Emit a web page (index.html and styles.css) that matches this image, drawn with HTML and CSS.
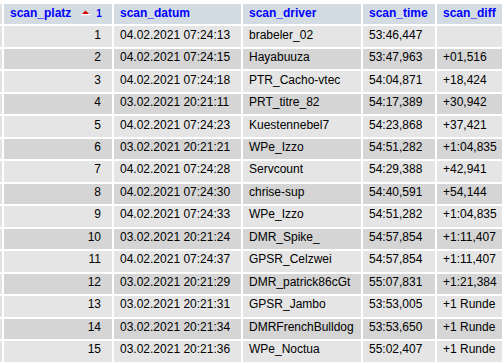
FILE: index.html
```html
<!DOCTYPE html>
<html>
<head>
<meta charset="utf-8">
<link rel="stylesheet" href="styles.css">
</head>
<body>
<table class="data">
<colgroup>
<col class="c-stub"><col class="c-platz"><col class="c-datum"><col class="c-driver"><col class="c-time"><col class="c-diff">
</colgroup>
<thead>
<tr>
<th class="stub"></th>
<th><span class="hd">scan_platz</span><svg class="sort" width="9" height="6" viewBox="0 0 9 6"><polygon points="4.5,0.5 8,4 1,4" fill="#d00000"/><rect x="0" y="4" width="9" height="1.2" fill="#ffffff"/></svg><span class="ord">1</span></th>
<th>scan_datum</th>
<th>scan_driver</th>
<th>scan_time</th>
<th>scan_diff</th>
</tr>
</thead>
<tbody>
<tr class="odd"><td class="stub"></td><td class="num">1</td><td>04.02.2021 07:24:13</td><td>brabeler_02</td><td>53:46,447</td><td></td></tr>
<tr class="even"><td class="stub"></td><td class="num">2</td><td>04.02.2021 07:24:15</td><td>Hayabuuza</td><td>53:47,963</td><td>+01,516</td></tr>
<tr class="odd"><td class="stub"></td><td class="num">3</td><td>04.02.2021 07:24:18</td><td>PTR_Cacho-vtec</td><td>54:04,871</td><td>+18,424</td></tr>
<tr class="even"><td class="stub"></td><td class="num">4</td><td>03.02.2021 20:21:11</td><td>PRT_titre_82</td><td>54:17,389</td><td>+30,942</td></tr>
<tr class="odd"><td class="stub"></td><td class="num">5</td><td>04.02.2021 07:24:23</td><td>Kuestennebel7</td><td>54:23,868</td><td>+37,421</td></tr>
<tr class="even"><td class="stub"></td><td class="num">6</td><td>03.02.2021 20:21:21</td><td>WPe_Izzo</td><td>54:51,282</td><td>+1:04,835</td></tr>
<tr class="odd"><td class="stub"></td><td class="num">7</td><td>04.02.2021 07:24:28</td><td>Servcount</td><td>54:29,388</td><td>+42,941</td></tr>
<tr class="even"><td class="stub"></td><td class="num">8</td><td>04.02.2021 07:24:30</td><td>chrise-sup</td><td>54:40,591</td><td>+54,144</td></tr>
<tr class="odd"><td class="stub"></td><td class="num">9</td><td>04.02.2021 07:24:33</td><td>WPe_Izzo</td><td>54:51,282</td><td>+1:04,835</td></tr>
<tr class="even"><td class="stub"></td><td class="num">10</td><td>03.02.2021 20:21:24</td><td>DMR_Spike_</td><td>54:57,854</td><td>+1:11,407</td></tr>
<tr class="odd"><td class="stub"></td><td class="num">11</td><td>04.02.2021 07:24:37</td><td>GPSR_Celzwei</td><td>54:57,854</td><td>+1:11,407</td></tr>
<tr class="even"><td class="stub"></td><td class="num">12</td><td>03.02.2021 20:21:29</td><td>DMR_patrick86cGt</td><td>55:07,831</td><td>+1:21,384</td></tr>
<tr class="odd"><td class="stub"></td><td class="num">13</td><td>03.02.2021 20:21:31</td><td>GPSR_Jambo</td><td>53:53,005</td><td>+1 Runde</td></tr>
<tr class="even"><td class="stub"></td><td class="num">14</td><td>03.02.2021 20:21:34</td><td>DMRFrenchBulldog</td><td>53:53,650</td><td>+1 Runde</td></tr>
<tr class="odd"><td class="stub"></td><td class="num">15</td><td>03.02.2021 20:21:36</td><td>WPe_Noctua</td><td>55:02,407</td><td>+1 Runde</td></tr>
</tbody>
</table>
</body>
</html>
```

FILE: styles.css
```css
html, body {
  margin: 0;
  padding: 0;
  background: #ffffff;
  overflow: hidden;
}

body {
  font-family: "Liberation Sans", Arial, sans-serif;
  font-size: 12px;
  color: #000000;
}

.data {
  table-layout: fixed;
  border-collapse: separate;
  border-spacing: 2px;
  margin-left: -10px;
  margin-top: 2px;
  width: 533px;
}

.c-stub { width: 10px; }
.c-platz { width: 108px; }
.c-datum { width: 127px; }
.c-driver { width: 118px; }
.c-time { width: 72px; }
.c-diff { width: 90px; }

.data th {
  background: #d3dce3;
  color: #0000ff;
  font-weight: bold;
  text-align: left;
  line-height: 14px;
  padding: 2px 6px 3.4px 6px;
  vertical-align: top;
  white-space: nowrap;
  overflow: hidden;
}

.data td {
  line-height: 14px;
  padding: 1.2px 6px 5.3px 6px;
  vertical-align: top;
  white-space: nowrap;
  overflow: hidden;
}

.data th.stub, .data td.stub {
  padding: 0;
  background: #e2e2e2;
}

.odd td { background: #e5e5e5; }
.even td { background: #d5d5d5; }

.data td.num {
  text-align: right;
  padding-right: 11px;
}

.sort {
  display: inline-block;
  vertical-align: baseline;
  margin-left: 10px;
  margin-bottom: 1px;
}

.ord {
  display: inline-block;
  font-size: 10px;
  vertical-align: baseline;
  margin-left: 6px;
}
```
